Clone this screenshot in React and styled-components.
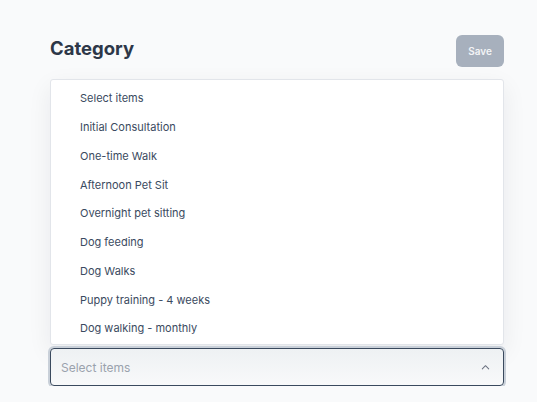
import React from "react";
import styled, { createGlobalStyle } from "styled-components";

const GlobalStyle = createGlobalStyle`
  html, body {
    margin: 0;
    padding: 0;
    background: #f9fafb;
    font-family: Inter, "Liberation Sans", sans-serif;
  }
`;

const items = [
  "Select items",
  "Initial Consultation",
  "One-time Walk",
  "Afternoon Pet Sit",
  "Overnight pet sitting",
  "Dog feeding",
  "Dog Walks",
  "Puppy training - 4 weeks",
  "Dog walking - monthly",
];

const App = () => {
  return (
    <>
      <GlobalStyle />
      <Page>
        <HeaderRow>
          <Title>Category</Title>
          <SaveButton disabled>Save</SaveButton>
        </HeaderRow>
        <ListBox>
          {items.map((item) => (
            <Option key={item}>{item}</Option>
          ))}
        </ListBox>
        <SelectBox>
          <Placeholder>Select items</Placeholder>
          <svg width="11" height="11" viewBox="0 0 24 24" fill="none" stroke="#6b7280" strokeWidth="2.2" strokeLinecap="round" strokeLinejoin="round">
            <path d="M5 15l7-7 7 7" />
          </svg>
        </SelectBox>
      </Page>
    </>
  );
};

export default App;

const Page = styled.div`
  width: 454px;
  padding: 35px 0 0 50px;
  display: flex;
  flex-direction: column;
`;

const HeaderRow = styled.div`
  display: flex;
  align-items: center;
  justify-content: space-between;
  height: 32px;
  margin-bottom: 12px;
`;

const Title = styled.h2`
  margin: 0;
  margin-top: -6px;
  font-size: 18.5px;
  font-weight: 700;
  color: #2d3748;
`;

const SaveButton = styled.button`
  width: 48px;
  height: 32px;
  border: none;
  border-radius: 6px;
  background: #a7b0bd;
  color: #f3f4f6;
  font-family: inherit;
  font-size: 10px;
  font-weight: 600;
`;

const ListBox = styled.div`
  box-sizing: border-box;
  height: 266px;
  background: #ffffff;
  border: 1px solid #e2e5ea;
  border-radius: 3px;
  box-shadow: 0 8px 24px rgba(15, 23, 42, 0.07);
  padding: 4px 0 0 29px;
  display: flex;
  flex-direction: column;
`;

const Option = styled.div`
  height: 28.75px;
  display: flex;
  align-items: center;
  font-size: 11px;
  color: #3a4a60;
`;

const SelectBox = styled.div`
  box-sizing: border-box;
  margin-top: 3px;
  height: 38px;
  border: 1.5px solid #3a4a5e;
  border-radius: 4px;
  box-shadow: 0 0 0 2px #c9d0d9;
  background: linear-gradient(#eef1f3, #f8f9fa);
  display: flex;
  align-items: center;
  justify-content: space-between;
  padding: 0 12px 0 10px;
`;

const Placeholder = styled.span`
  font-size: 12px;
  color: #9aa2ad;
`;
